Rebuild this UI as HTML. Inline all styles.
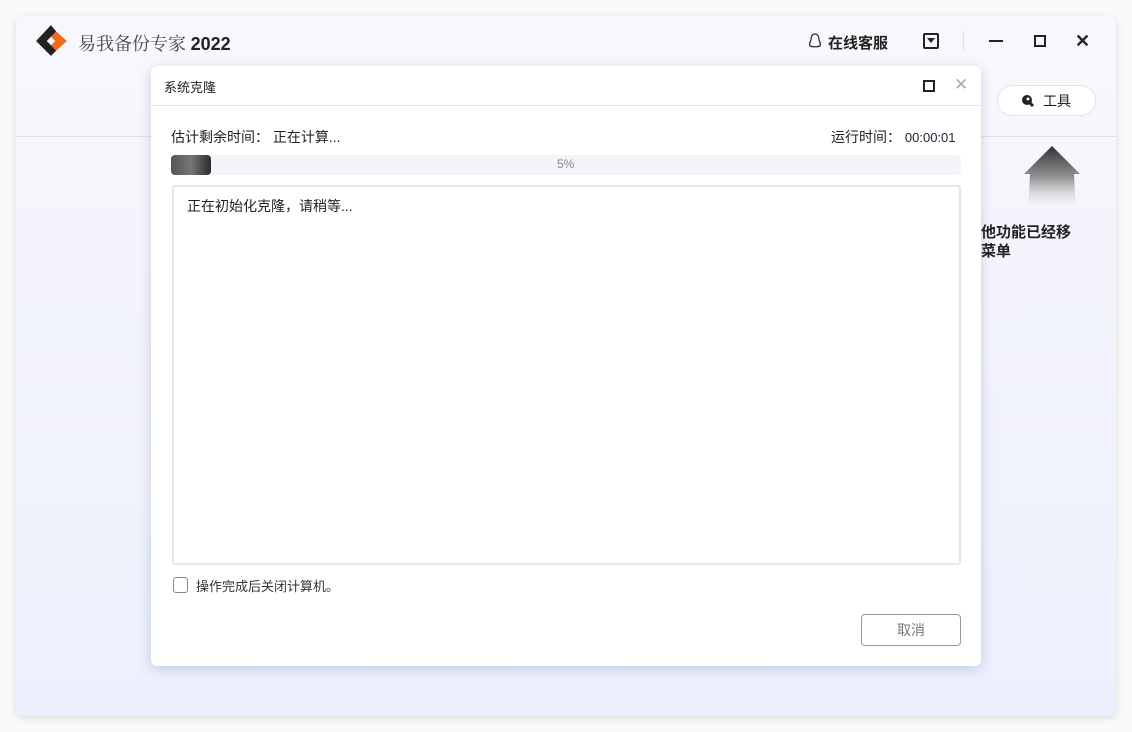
<!DOCTYPE html>
<html><head><meta charset="utf-8"><style>
*{margin:0;padding:0;box-sizing:border-box}
body{width:1132px;height:732px;background:#fafafa;position:relative;overflow:hidden;font-family:"Liberation Sans","Noto Sans CJK SC",sans-serif;color:#222}
.win{position:absolute;left:16px;top:16px;width:1100px;height:700px;border-radius:6px;background:linear-gradient(#f8f8fc 0%,#f3f4fc 40%,#eceffd 100%);box-shadow:0 2px 8px rgba(0,0,0,.12)}
.abs{position:absolute}
.dlg{position:absolute;left:151px;top:66px;width:830px;height:600px;background:#fff;border-radius:6px;box-shadow:0 3px 12px rgba(80,90,140,.25)}
</style></head><body>
<div class="win"></div>
<svg class="abs" style="left:35px;top:25px" width="34" height="32" viewBox="0 0 32 30"><path d="M15 0 L1 15 L15 29 L20 24 L11 15 L20 6Z" fill="#222"/><path d="M20 6 L30 15 L20 24 L15 19 L19 15 L15 11Z" fill="#f26b1d"/></svg>
<div class="abs" style="left:78px;top:30px;font-size:18px;color:#444;font-family:'Noto Serif CJK SC',serif">易我备份专家 <b style="font-family:'Liberation Sans',sans-serif;color:#222">2022</b></div>
<svg class="abs" style="left:808px;top:33px" width="14" height="16" viewBox="0 0 14 16"><path d="M7 1C4 1 3 4 3 7C2 9 1 11 2 13C4 14 10 14 12 13C13 11 12 9 11 7C11 4 10 1 7 1Z" fill="none" stroke="#333" stroke-width="1.3"/></svg>
<div class="abs" style="left:828px;top:32px;font-size:15px;font-weight:bold">在线客服</div>
<div class="abs" style="left:923px;top:33px;width:16px;height:16px;border:2px solid #222;border-radius:2px"></div>
<div class="abs" style="left:927px;top:38px;width:0;height:0;border-left:4px solid transparent;border-right:4px solid transparent;border-top:5px solid #222"></div>
<div class="abs" style="left:963px;top:31px;width:1px;height:20px;background:#dde"></div>
<div class="abs" style="left:989px;top:40px;width:14px;height:2px;background:#222"></div>
<div class="abs" style="left:1034px;top:35px;width:12px;height:12px;border:2px solid #222"></div>
<div class="abs" style="left:1075px;top:31px;font-size:18px;font-weight:bold">✕</div>
<div class="abs" style="left:16px;top:136px;width:1100px;height:1px;background:#dfe2ee"></div>
<div class="abs" style="left:997px;top:85px;width:99px;height:31px;border-radius:16px;background:#fff;border:1px solid #e3e5ee"></div>
<svg class="abs" style="left:1021px;top:94px" width="14" height="14" viewBox="0 0 14 14"><circle cx="6" cy="6" r="5" fill="#222"/><path d="M8 8L12 12" stroke="#222" stroke-width="3"/><circle cx="7" cy="5" r="1.5" fill="#fff"/></svg>
<div class="abs" style="left:1043px;top:91px;font-size:14px">工具</div>
<svg class="abs" style="left:1024px;top:146px" width="60" height="66" viewBox="0 0 60 66"><defs><linearGradient id="g" x1="0" y1="0" x2="0" y2="1"><stop offset="0" stop-color="#333"/><stop offset=".5" stop-color="#999"/><stop offset="1" stop-color="#fff" stop-opacity="0"/></linearGradient></defs><path d="M28 0L56 28H50L52 66H4L6 28H0Z" fill="url(#g)"/></svg>
<div class="abs" style="left:966px;top:223px;font-size:15px;font-weight:bold;line-height:19px;color:#222">其他功能已经移<br>到菜单</div>
<div class="dlg">
<div class="abs" style="left:13px;top:11px;font-size:13px">系统克隆</div>
<div class="abs" style="left:772px;top:14px;width:12px;height:12px;border:2px solid #222"></div>
<div class="abs" style="left:803px;top:9px;font-size:17px;color:#aab">✕</div>
<div class="abs" style="left:0;top:39px;width:830px;height:1px;background:#e2e5ef"></div>
<div class="abs" style="left:20px;top:61px;font-size:14px">估计剩余时间：&nbsp;正在计算...</div>
<div class="abs" style="left:680px;top:61px;font-size:14px">运行时间：&nbsp;<span style="font-size:13px;color:#223">00:00:01</span></div>
<div class="abs" style="left:20px;top:89px;width:790px;height:20px;background:#f3f4f8;border-radius:4px"></div>
<div class="abs" style="left:20px;top:89px;width:40px;height:20px;background:linear-gradient(90deg,#555,#777,#2a2a2a);border-radius:4px"></div>
<div class="abs" style="left:406px;top:91px;font-size:12px;color:#888">5%</div>
<div class="abs" style="left:21px;top:119px;width:789px;height:380px;border:2px solid #e4e6ef;border-radius:3px"></div>
<div class="abs" style="left:36px;top:130px;font-size:14px">正在初始化克隆，请稍等...</div>
<div class="abs" style="left:22px;top:511px;width:15px;height:16px;border:1.5px solid #888;border-radius:3px"></div>
<div class="abs" style="left:45px;top:510px;font-size:13px;color:#333">操作完成后关闭计算机。</div>
<div class="abs" style="left:710px;top:548px;width:100px;height:32px;border:1px solid #999;border-radius:4px;font-size:14px;color:#777;text-align:center;line-height:30px">取消</div>
</div>
</body></html>
